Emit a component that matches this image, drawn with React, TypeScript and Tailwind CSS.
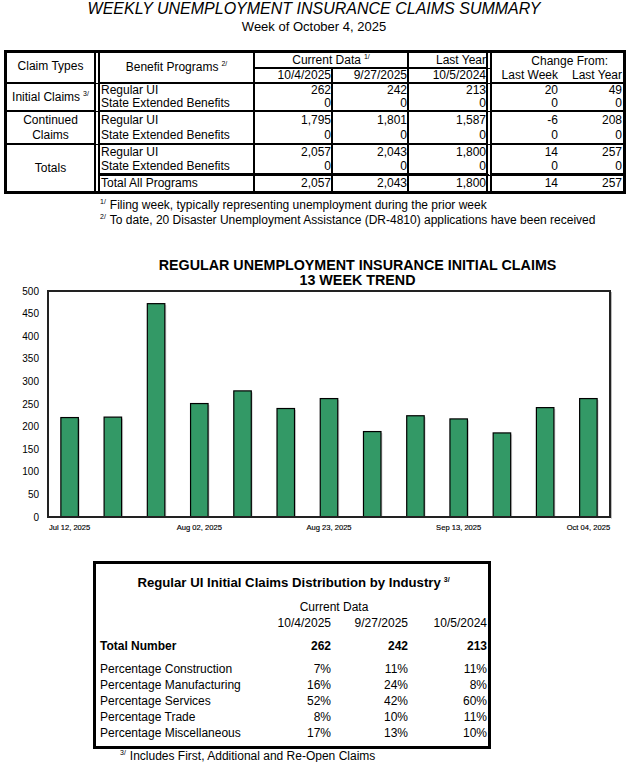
import React from 'react';

type Row = {
  program: string;
  values: string[];
};

type Group = {
  label: React.ReactNode;
  rows: Row[];
  heights: number[];
};

const groups: Group[] = [
  {
    label: (
      <>
        Initial Claims<sup className="text-[7px] ml-[3px] -top-[5px]">3/</sup>
      </>
    ),
    heights: [13, 15],
    rows: [
      { program: 'Regular UI', values: ['262', '242', '213', '20', '49'] },
      { program: 'State Extended Benefits', values: ['0', '0', '0', '0', '0'] },
    ],
  },
  {
    label: (
      <>
        Continued
        <br />
        Claims
      </>
    ),
    heights: [16, 17],
    rows: [
      { program: 'Regular UI', values: ['1,795', '1,801', '1,587', '-6', '208'] },
      { program: 'State Extended Benefits', values: ['0', '0', '0', '0', '0'] },
    ],
  },
  {
    label: 'Totals',
    heights: [14, 17, 15],
    rows: [
      { program: 'Regular UI', values: ['2,057', '2,043', '1,800', '14', '257'] },
      { program: 'State Extended Benefits', values: ['0', '0', '0', '0', '0'] },
      { program: 'Total All Programs', values: ['2,057', '2,043', '1,800', '14', '257'] },
    ],
  },
];

const trend = [220, 221, 472, 251, 279, 240, 262, 189, 224, 217, 186, 242, 262];
const trendLabels: Record<number, string> = {
  0: 'Jul 12, 2025',
  3: 'Aug 02, 2025',
  6: 'Aug 23, 2025',
  9: 'Sep 13, 2025',
  12: 'Oct 04, 2025',
};

const industry = [
  { name: 'Percentage Construction', values: ['7%', '11%', '11%'] },
  { name: 'Percentage Manufacturing', values: ['16%', '24%', '8%'] },
  { name: 'Percentage Services', values: ['52%', '42%', '60%'] },
  { name: 'Percentage Trade', values: ['8%', '10%', '11%'] },
  { name: 'Percentage Miscellaneous', values: ['17%', '13%', '10%'] },
];

const Sup = ({ children }: { children: React.ReactNode }) => (
  <sup className="text-[7px] ml-[3px] -top-[5px]">{children}</sup>
);

const SummaryTable: React.FC = () => {
  const valueBorder = [
    'border-r-2',
    'border-r-2',
    'border-r-[6px] [border-right-style:double]',
    '',
    '',
  ];
  const valuePad = ['pr-0', 'pr-0', 'pr-0', 'pr-[2px]', 'pr-[1px]'];

  return (
    <table className="ml-[4px] w-[622px] table-fixed border-separate border-spacing-0 border-[3px] border-black text-[12px] leading-[13px]">
      <colgroup>
        <col className="w-[93px]" />
        <col className="w-[155px]" />
        <col className="w-[78px]" />
        <col className="w-[76px]" />
        <col className="w-[83px]" />
        <col className="w-[68px]" />
        <col className="w-[63px]" />
      </colgroup>
      <thead>
        <tr className="h-[16px]">
          <th rowSpan={2} className="p-0 pb-[2px] font-normal border-black border-b-2 border-r-[6px] [border-right-style:double]">
            Claim Types
          </th>
          <th rowSpan={2} className="p-0 font-normal border-black border-b-2 border-r-2">
            Benefit Programs<Sup>2/</Sup>
          </th>
          <th colSpan={2} className="p-0 font-normal border-black border-b-2 border-r-2">
            Current Data<Sup>1/</Sup>
          </th>
          <th className="p-0 text-right font-normal border-black border-b-2 border-r-[6px] [border-right-style:double]">
            Last Year
          </th>
          <th colSpan={2} className="p-0 pr-[15px] text-right font-normal">
            Change From:
          </th>
        </tr>
        <tr className="h-[14px]">
          <th className="p-0 text-right font-normal border-black border-b-2 border-r-2">10/4/2025</th>
          <th className="p-0 text-right font-normal border-black border-b-2 border-r-2">9/27/2025</th>
          <th className="p-0 text-right font-normal border-black border-b-2 border-r-[6px] [border-right-style:double]">
            10/5/2024
          </th>
          <th className="p-0 pr-[2px] text-right font-normal border-black border-b-2">Last Week</th>
          <th className="p-0 pr-[1px] text-right font-normal border-black border-b-2">Last Year</th>
        </tr>
      </thead>
      <tbody>
        {groups.map((g, gi) => {
          const lastGroup = gi === groups.length - 1;
          return g.rows.map((r, ri) => {
            const isLast = ri === g.rows.length - 1;
            let bottom = '';
            if (!lastGroup && isLast) bottom = 'border-b-2';
            if (lastGroup && ri === 1) bottom = 'border-b-[3px]';
            return (
              <tr key={`${gi}-${ri}`} style={{ height: g.heights[ri] }}>
                {ri === 0 && (
                  <td
                    rowSpan={g.rows.length}
                    className={`p-0 text-center leading-[15px] border-black border-r-[6px] [border-right-style:double] ${
                      lastGroup ? '' : 'border-b-2'
                    }`}
                  >
                    {g.label}
                  </td>
                )}
                <td className={`p-0 pl-[1px] whitespace-nowrap border-black border-r-2 ${bottom}`}>{r.program}</td>
                {r.values.map((v, vi) => (
                  <td key={vi} className={`p-0 text-right border-black ${valuePad[vi]} ${valueBorder[vi]} ${bottom}`}>
                    {v}
                  </td>
                ))}
              </tr>
            );
          });
        })}
      </tbody>
    </table>
  );
};

const TrendChart: React.FC = () => {
  const x0 = 48;
  const x1 = 610;
  const yTop = 3;
  const yBot = 229;
  const scale = (yBot - yTop) / 500;
  const slot = (x1 - x0) / 13;
  const barW = 17.5;

  return (
    <svg width={628} height={246} className="block overflow-visible">
      {[0, 50, 100, 150, 200, 250, 300, 350, 400, 450, 500].map((v) => (
        <text
          key={v}
          x={39}
          y={yBot - v * scale}
          textAnchor="end"
          dominantBaseline="central"
          fontSize={10}
          fill="#000"
        >
          {v}
        </text>
      ))}
      {trend.map((v, i) => {
        const bx = x0 + slot * i + (slot - barW) / 2;
        const by = yBot - v * scale;
        return (
          <g key={i}>
            <rect x={bx + 1.5} y={by + 1.5} width={barW} height={yBot - by - 1.5} fill="#d4d4d4" />
            <rect x={bx} y={by} width={barW} height={yBot - by} fill="#339966" stroke="#000" strokeWidth={1.2} />
          </g>
        );
      })}
      <rect x={x0} y={yTop} width={x1 - x0} height={yBot - yTop} fill="none" stroke="#222" strokeWidth={2} />
      <line x1={x1 + 1.5} y1={yTop + 1} x2={x1 + 1.5} y2={yBot + 1.5} stroke="#bbb" strokeWidth={1} />
      {Object.entries(trendLabels).map(([idx, label]) => (
        <text
          key={idx}
          x={x0 + slot * (Number(idx) + 0.5)}
          y={239}
          textAnchor="middle"
          dominantBaseline="central"
          fontSize={7.6}
          fill="#000"
          stroke="#000"
          strokeWidth={0.15}
        >
          {label}
        </text>
      ))}
    </svg>
  );
};

const IndustryBox: React.FC = () => (
  <div className="ml-[93px] mt-[27px] w-[398px] border-[3px] border-black pl-[4px] pr-[1px] pt-[11px] pb-[5px]">
    <div className="text-center text-[13.2px] font-bold leading-[15px]">
      Regular UI Initial Claims Distribution by Industry<Sup>3/</Sup>
    </div>
    <div className="mt-[9px] grid grid-cols-[160px_71px_77px_79px] text-[12px] leading-[16px]">
      <div />
      <div className="col-span-2 text-center">Current Data</div>
      <div />
      <div />
      <div className="text-right">10/4/2025</div>
      <div className="text-right">9/27/2025</div>
      <div className="text-right">10/5/2024</div>
      <div className="mt-[7px] font-bold">Total Number</div>
      <div className="mt-[7px] text-right font-bold">262</div>
      <div className="mt-[7px] text-right font-bold">242</div>
      <div className="mt-[7px] text-right font-bold">213</div>
      {industry.map((row, i) => (
        <React.Fragment key={row.name}>
          <div className={i === 0 ? 'mt-[7px]' : ''}>{row.name}</div>
          {row.values.map((v, vi) => (
            <div key={vi} className={`text-right ${i === 0 ? 'mt-[7px]' : ''}`}>
              {v}
            </div>
          ))}
        </React.Fragment>
      ))}
    </div>
  </div>
);

export default function App() {
  return (
    <div className="w-[628px] h-[762px] overflow-hidden bg-white text-black font-['Liberation_Sans',Arial,sans-serif]">
      {/* Header */}
      <h1 className="text-center text-[16px] italic font-normal leading-[18px]">
        WEEKLY UNEMPLOYMENT INSURANCE CLAIMS SUMMARY
      </h1>
      <p className="mt-[1px] text-center text-[13px] leading-[15px]">Week of October 4, 2025</p>

      {/* Summary table */}
      <div className="mt-[16px]">
        <SummaryTable />
      </div>

      {/* Footnotes */}
      <div className="mt-[4px] pl-[100px] text-[12px] leading-[15px]">
        <p>
          <sup className="text-[7px] -top-[5px] mr-[4px]">1/</sup>Filing week, typically representing unemployment during the
          prior week
        </p>
        <p>
          <sup className="text-[7px] -top-[5px] mr-[4px]">2/</sup>To date, 20 Disaster Unemployment Assistance (DR-4810)
          applications have been received
        </p>
      </div>

      {/* Chart */}
      <div className="mt-[30px] pl-[87px] text-center text-[14.3px] font-bold leading-[15px]">
        <p>REGULAR UNEMPLOYMENT INSURANCE INITIAL CLAIMS</p>
        <p>13 WEEK TREND</p>
      </div>
      <TrendChart />

      {/* Industry distribution */}
      <IndustryBox />
      <p className="pl-[120px] text-[12px] leading-[14px]">
        <sup className="text-[7px] -top-[5px] mr-[4px]">3/</sup>Includes First, Additional and Re-Open Claims
      </p>
    </div>
  );
}
